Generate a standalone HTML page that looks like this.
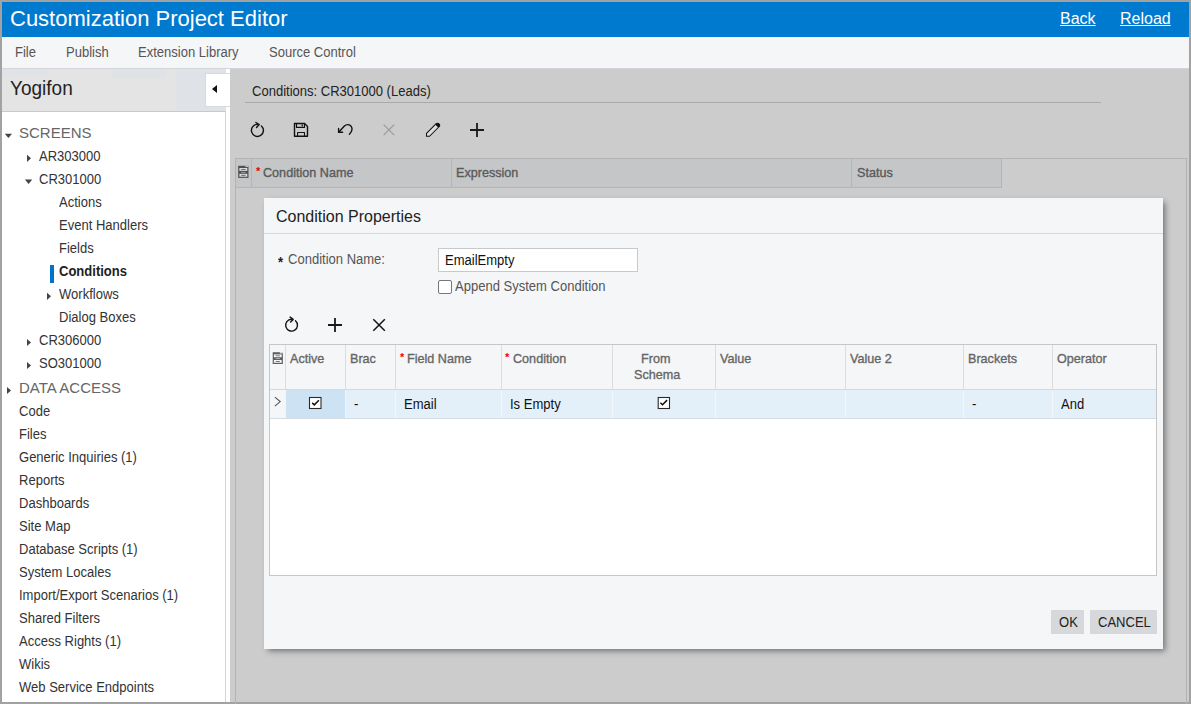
<!DOCTYPE html>
<html><head><meta charset="utf-8">
<style>
*{box-sizing:border-box;margin:0;padding:0}
html,body{width:1191px;height:704px;overflow:hidden}
body{position:relative;background:#a2a2a2;font-family:"Liberation Sans",sans-serif;color:#333}
.a{position:absolute}
.t{position:absolute;white-space:nowrap;line-height:20px}
.f12b{font-size:12px;font-weight:700}
.hdr{font-size:13px;transform:scaleX(0.97);transform-origin:0 0;-webkit-text-stroke:0.35px currentColor}
.f13{font-size:14px;transform:scaleX(0.93);transform-origin:0 0}
.f15{font-size:15px}
.tri-r{position:absolute;width:0;height:0;border-top:4px solid transparent;border-bottom:4px solid transparent;border-left:5px solid #444}
.tri-d{position:absolute;width:0;height:0;border-left:4px solid transparent;border-right:4px solid transparent;border-top:5px solid #444}
svg{position:absolute;overflow:visible}
</style></head><body>

<!-- header -->
<div class="a" style="left:2px;top:2px;width:1187px;height:35px;background:#007acf"></div>
<div class="t" style="left:10px;top:9px;font-size:22px;color:#fff">Customization Project Editor</div>
<div class="t" style="left:1060px;top:9px;font-size:16px;color:#fff;text-decoration:underline">Back</div>
<div class="t" style="left:1120px;top:9px;font-size:16px;color:#fff;text-decoration:underline">Reload</div>

<!-- menubar -->
<div class="a" style="left:2px;top:37px;width:1187px;height:31px;background:#f5f6f8"></div>
<div class="t f13" style="left:15px;top:42px;color:#555">File</div>
<div class="t f13" style="left:66px;top:42px;color:#555">Publish</div>
<div class="t f13" style="left:138px;top:42px;color:#555">Extension Library</div>
<div class="t f13" style="left:269px;top:42px;color:#555">Source Control</div>

<!-- sidebar -->
<div class="a" style="left:2px;top:68px;width:1187px;height:1px;background:#d3d5d8;z-index:5"></div>
<div class="a" style="left:2px;top:68px;width:224px;height:43px;background:#e4e4e4"></div>
<div class="a" style="left:2px;top:69px;width:46px;height:7px;background:#dfe2e6"></div>
<div class="a" style="left:112px;top:69px;width:54px;height:9px;background:#dfe2e6"></div>
<div class="a" style="left:176px;top:69px;width:50px;height:42px;background:#dfe2e6"></div>
<div class="a" style="left:2px;top:111px;width:224px;height:1px;background:#c9c9c9"></div>
<div class="a" style="left:2px;top:112px;width:223px;height:590px;background:#fff"></div>
<div class="a" style="left:225px;top:112px;width:1px;height:590px;background:#d4d4d4"></div>
<div class="a" style="left:226px;top:68px;width:4px;height:634px;background:#fff"></div>
<div class="a" style="left:205px;top:73px;width:25px;height:34px;background:#fff;border:1px solid #d9dadd;border-right:none"></div>
<div class="tri-l a" style="left:211.5px;top:85px;width:0;height:0;border-top:4px solid transparent;border-bottom:4px solid transparent;border-right:5px solid #111"></div>
<div class="t" style="left:10px;top:78px;font-size:20px;color:#222;transform:scaleX(0.95);transform-origin:0 0">Yogifon</div>

<div id="tree">
<svg width="60" height="400" style="left:0;top:0" viewBox="0 0 60 400"><g fill="#444">
<polygon points="4.8,133.8 12,133.8 8.4,138.1"/>
<polygon points="24.9,179.6 32.2,179.6 28.55,183.9"/>
<polygon points="27,154.8 31,158.35 27,161.9"/>
<polygon points="47,292.8 51,296.35 47,299.9"/>
<polygon points="27,338.9 31,342.45 27,346"/>
<polygon points="27,361.9 31,365.45 27,369"/>
<polygon points="7,386.9 11,390.45 7,394"/>
</g></svg>
<div class="t f15" style="left:19px;top:123px;color:#666">SCREENS</div>
<div class="t f13" style="left:39px;top:146px">AR303000</div>
<div class="t f13" style="left:39px;top:169px">CR301000</div>
<div class="t f13" style="left:59px;top:192px">Actions</div>
<div class="t f13" style="left:59px;top:215px">Event Handlers</div>
<div class="t f13" style="left:59px;top:238px">Fields</div>
<div class="a" style="left:50px;top:265px;width:4px;height:18px;background:#0073cc"></div>
<div class="t f13" style="left:59px;top:261px;font-weight:700;color:#222">Conditions</div>
<div class="t f13" style="left:59px;top:284px">Workflows</div>
<div class="t f13" style="left:59px;top:307px">Dialog Boxes</div>
<div class="t f13" style="left:39px;top:330px">CR306000</div>
<div class="t f13" style="left:39px;top:353px">SO301000</div>
<div class="t f15" style="left:19px;top:378px;color:#666">DATA ACCESS</div>
<div class="t f13" style="left:19px;top:401px">Code</div>
<div class="t f13" style="left:19px;top:424px">Files</div>
<div class="t f13" style="left:19px;top:447px">Generic Inquiries (1)</div>
<div class="t f13" style="left:19px;top:470px">Reports</div>
<div class="t f13" style="left:19px;top:493px">Dashboards</div>
<div class="t f13" style="left:19px;top:516px">Site Map</div>
<div class="t f13" style="left:19px;top:539px">Database Scripts (1)</div>
<div class="t f13" style="left:19px;top:562px">System Locales</div>
<div class="t f13" style="left:19px;top:585px">Import/Export Scenarios (1)</div>
<div class="t f13" style="left:19px;top:608px">Shared Filters</div>
<div class="t f13" style="left:19px;top:631px">Access Rights (1)</div>
<div class="t f13" style="left:19px;top:654px">Wikis</div>
<div class="t f13" style="left:19px;top:677px">Web Service Endpoints</div>
</div>

<!-- main -->
<div class="a" style="left:230px;top:68px;width:959px;height:634px;background:#cccccc"></div>
<div class="t f13" style="left:252px;top:81px;color:#222">Conditions: CR301000 (Leads)</div>
<div class="a" style="left:245px;top:102px;width:856px;height:1px;background:#a9a9a9"></div>

<!-- main grid frame -->
<div class="a" style="left:235px;top:158px;width:952px;height:560px;border:1px solid #b3b3b3"></div>
<div class="a" style="left:236px;top:159px;width:766px;height:29px;background:#c5c6c8;border-bottom:1px solid #b2b5b9;border-right:1px solid #b2b5b9"></div>
<div class="a" style="left:251px;top:159px;width:1px;height:28px;background:#b5b5b5"></div>
<div class="a" style="left:451px;top:159px;width:1px;height:28px;background:#b5b5b5"></div>
<div class="a" style="left:851px;top:159px;width:1px;height:28px;background:#b5b5b5"></div>
<div class="t f12b" style="left:256px;top:161px;color:#e00;font-size:11px">*</div>
<div class="t hdr" style="left:263px;top:163px;color:#5a5a5a">Condition Name</div>
<div class="t hdr" style="left:456px;top:163px;color:#5a5a5a">Expression</div>
<div class="t hdr" style="left:857px;top:163px;color:#5a5a5a">Status</div>

<!-- dialog -->
<div class="a" style="left:264px;top:198px;width:899px;height:451px;background:#f5f6f8;box-shadow:3px 3px 6px -1px rgba(0,0,0,0.45)"></div>
<div class="t" style="left:276px;top:207px;font-size:16px;color:#222">Condition Properties</div>
<div class="a" style="left:264px;top:233px;width:899px;height:1px;background:#d8d8d8"></div>
<div class="t f13" style="left:278px;top:252px;color:#222;font-weight:700">*</div>
<div class="t f13" style="left:288px;top:249px;color:#555">Condition Name:</div>
<div class="a" style="left:438px;top:248px;width:200px;height:24px;background:#fff;border:1px solid #c9c9c9"></div>
<div class="t f13" style="left:445px;top:250px;color:#111">EmailEmpty</div>
<div class="a" style="left:438px;top:280px;width:14px;height:14px;background:#fff;border:1px solid #777;border-radius:2px"></div>
<div class="t f13" style="left:455px;top:276px;color:#555">Append System Condition</div>

<!-- dialog grid -->
<div class="a" style="left:269px;top:344px;width:888px;height:232px;background:#fff;border:1px solid #c6c6c6"></div>
<div class="a" style="left:270px;top:345px;width:886px;height:45px;background:#f5f6f8;border-bottom:1px solid #d6d8db"></div>
<div class="a" style="left:270px;top:390px;width:886px;height:29px;background:#e3f0f9;border-bottom:1px solid #d3dde5"></div>
<div class="a" style="left:285px;top:390px;width:60px;height:28px;background:#cde3f3"></div>
<div class="a" style="left:270px;top:390px;width:15px;height:28px;background:#f5f6f8"></div>
<div class="a" style="left:285px;top:345px;width:1px;height:44px;background:#dcdcdc"></div>
<div class="a" style="left:285px;top:390px;width:1px;height:28px;background:#f2f6f9"></div>
<div class="a" style="left:345px;top:345px;width:1px;height:44px;background:#dcdcdc"></div>
<div class="a" style="left:345px;top:390px;width:1px;height:28px;background:#f2f6f9"></div>
<div class="a" style="left:395px;top:345px;width:1px;height:44px;background:#dcdcdc"></div>
<div class="a" style="left:395px;top:390px;width:1px;height:28px;background:#f2f6f9"></div>
<div class="a" style="left:501px;top:345px;width:1px;height:44px;background:#dcdcdc"></div>
<div class="a" style="left:501px;top:390px;width:1px;height:28px;background:#f2f6f9"></div>
<div class="a" style="left:612px;top:345px;width:1px;height:44px;background:#dcdcdc"></div>
<div class="a" style="left:612px;top:390px;width:1px;height:28px;background:#f2f6f9"></div>
<div class="a" style="left:715px;top:345px;width:1px;height:44px;background:#dcdcdc"></div>
<div class="a" style="left:715px;top:390px;width:1px;height:28px;background:#f2f6f9"></div>
<div class="a" style="left:845px;top:345px;width:1px;height:44px;background:#dcdcdc"></div>
<div class="a" style="left:845px;top:390px;width:1px;height:28px;background:#f2f6f9"></div>
<div class="a" style="left:963px;top:345px;width:1px;height:44px;background:#dcdcdc"></div>
<div class="a" style="left:963px;top:390px;width:1px;height:28px;background:#f2f6f9"></div>
<div class="a" style="left:1052px;top:345px;width:1px;height:44px;background:#dcdcdc"></div>
<div class="a" style="left:1052px;top:390px;width:1px;height:28px;background:#f2f6f9"></div>

<div class="t hdr" style="left:290px;top:349px;color:#666">Active</div>
<div class="t hdr" style="left:350px;top:349px;color:#666">Brac</div>
<div class="t f12b" style="left:400px;top:347px;color:#f00;font-size:11px">*</div>
<div class="t hdr" style="left:407px;top:349px;color:#666">Field Name</div>
<div class="t f12b" style="left:505px;top:347px;color:#f00;font-size:11px">*</div>
<div class="t hdr" style="left:513px;top:349px;color:#666">Condition</div>
<div class="t hdr" style="left:641px;top:349px;color:#666">From</div>
<div class="t hdr" style="left:634px;top:365px;color:#666">Schema</div>
<div class="t hdr" style="left:720px;top:349px;color:#666">Value</div>
<div class="t hdr" style="left:850px;top:349px;color:#666">Value 2</div>
<div class="t hdr" style="left:968px;top:349px;color:#666">Brackets</div>
<div class="t hdr" style="left:1057px;top:349px;color:#666">Operator</div>

<div class="t f13" style="left:354px;top:394px;color:#111">-</div>
<div class="t f13" style="left:404px;top:394px;color:#111">Email</div>
<div class="t f13" style="left:510px;top:394px;color:#111">Is Empty</div>
<div class="t f13" style="left:972px;top:394px;color:#111">-</div>
<div class="t f13" style="left:1061px;top:394px;color:#111">And</div>

<!-- buttons -->
<div class="a" style="left:1051px;top:610px;width:33px;height:24px;background:#d6d8db"></div>
<div class="a" style="left:1090px;top:610px;width:67px;height:24px;background:#d6d8db"></div>
<div class="t f13" style="left:1059px;top:612px;color:#222">OK</div>
<div class="t f13" style="left:1098px;top:612px;color:#222">CANCEL</div>


<svg width="1191" height="704" style="left:0;top:0" viewBox="0 0 1191 704">
 <g fill="none" stroke="#111" stroke-width="1.4" stroke-linecap="round" stroke-linejoin="round">
  <!-- refresh main -->
  <path d="M261.4,125.9 A6,6 0 1 1 257.3,124.4"/>
  <path d="M255.9,122.5 L259.2,124.6 L256.5,127.4"/>
  <!-- save -->
  <path d="M294.5,123.5 H304.6 L307.5,126.4 V136.3 H294.5 Z"/>
  <path d="M296.5,123.6 V127.4 H304.5 V123.6" stroke-width="1.1"/>
  <path d="M297.6,136.2 V132.5 H304.5 V136.2" stroke-width="1.1"/>
  <!-- undo -->
  <path d="M338.9,131.9 L344.4,126.1 C346.4,124.1 349.7,124.1 351.2,126.4 C352.5,128.4 351.8,131.8 349.4,134.3"/>
  <path d="M338.6,128.4 V132.2 H342.6"/>
  <!-- pencil -->
  <path d="M426.5,133.3 L435.9,123.9 C436.9,122.9 438.3,123 439,123.8 C439.8,124.6 439.8,126 438.8,127 L429.5,136.3 H426.5 Z" stroke-width="1.05" stroke-linejoin="miter" fill="#dcdcdc"/>
 </g>
 <path d="M435.2,124.6 L438.2,127.6 L438.8,127 C439.8,126 439.8,124.6 439,123.8 C438.3,123 436.9,122.9 435.9,123.9 Z" fill="#111"/>
 <rect x="301.6" y="124.4" width="1.3" height="1.9" fill="#111"/>
 <!-- disabled X -->
 <path d="M383.6,124.6 L394.2,135.2 M394.2,124.6 L383.6,135.2" stroke="#9a9a9a" stroke-width="1.2" fill="none"/>
 <!-- plus main -->
 <path d="M477,123 V137 M470,130 H484" stroke="#1a1a1a" stroke-width="1.8" fill="none"/>

 <!-- main grid icon -->
 <g transform="translate(238.2,165.8)">
  <rect x="0" y="0" width="10.3" height="12.1" fill="#505050"/>
  <rect x="7.2" y="0" width="3.1" height="1.2" fill="#c5c6c8"/>
  <rect x="1.2" y="2.2" width="7.9" height="2.9" fill="#dadada"/>
  <rect x="1.2" y="8" width="7.9" height="2.9" fill="#dadada"/>
  <rect x="3" y="3.3" width="4.3" height="0.8" fill="#505050"/>
  <rect x="3" y="9.1" width="4.3" height="0.8" fill="#505050"/>
  <rect x="3" y="6.2" width="4.3" height="0.7" fill="#b5b5b5"/>
 </g>
 <!-- dialog grid icon -->
 <g transform="translate(272.7,352.2)">
  <rect x="0" y="0" width="10.2" height="11.8" fill="#606060"/>
  <rect x="7.2" y="0" width="3" height="1.2" fill="#f5f6f8"/>
  <rect x="1.2" y="2.2" width="7.8" height="2.8" fill="#f5f6f8"/>
  <rect x="1.2" y="7.8" width="7.8" height="2.8" fill="#f5f6f8"/>
  <rect x="3" y="3.2" width="4.2" height="0.8" fill="#606060"/>
  <rect x="3" y="8.8" width="4.2" height="0.8" fill="#606060"/>
  <rect x="3" y="6" width="4.2" height="0.7" fill="#cfcfcf"/>
 </g>

 <g fill="none" stroke="#111" stroke-width="1.4" stroke-linecap="round" stroke-linejoin="round">
  <!-- refresh dialog -->
  <path d="M295.5,320.8 A5.9,5.9 0 1 1 291.5,319.3"/>
  <path d="M290.1,317.1 L293.2,319.4 L290.6,322.1"/>
 </g>
 <!-- plus dialog -->
 <path d="M335,318 V332 M328,325 H342" stroke="#1a1a1a" stroke-width="1.8" fill="none"/>
 <!-- x dialog -->
 <path d="M373.3,319.3 L384.8,330.8 M384.8,319.3 L373.3,330.8" stroke="#111" stroke-width="1.5" fill="none"/>

 <!-- row arrow -->
 <path d="M274.9,397.2 L280.2,401.6 L274.9,406.1" stroke="#555" stroke-width="1.1" fill="none"/>
 <!-- checkboxes -->
 <rect x="309.5" y="397.5" width="11.5" height="11" fill="#fff" stroke="#2a2a2a" stroke-width="1.1"/>
 <path d="M312.2,402.9 L314.3,404.9 L318.9,400.3" stroke="#111" stroke-width="1.5" fill="none"/>
 <rect x="658.2" y="397.5" width="11.3" height="11" fill="#fff" stroke="#2a2a2a" stroke-width="1.1"/>
 <path d="M660.4,402.7 L662.5,404.7 L667.1,400.1" stroke="#111" stroke-width="1.5" fill="none"/>
</svg>

</body></html>
